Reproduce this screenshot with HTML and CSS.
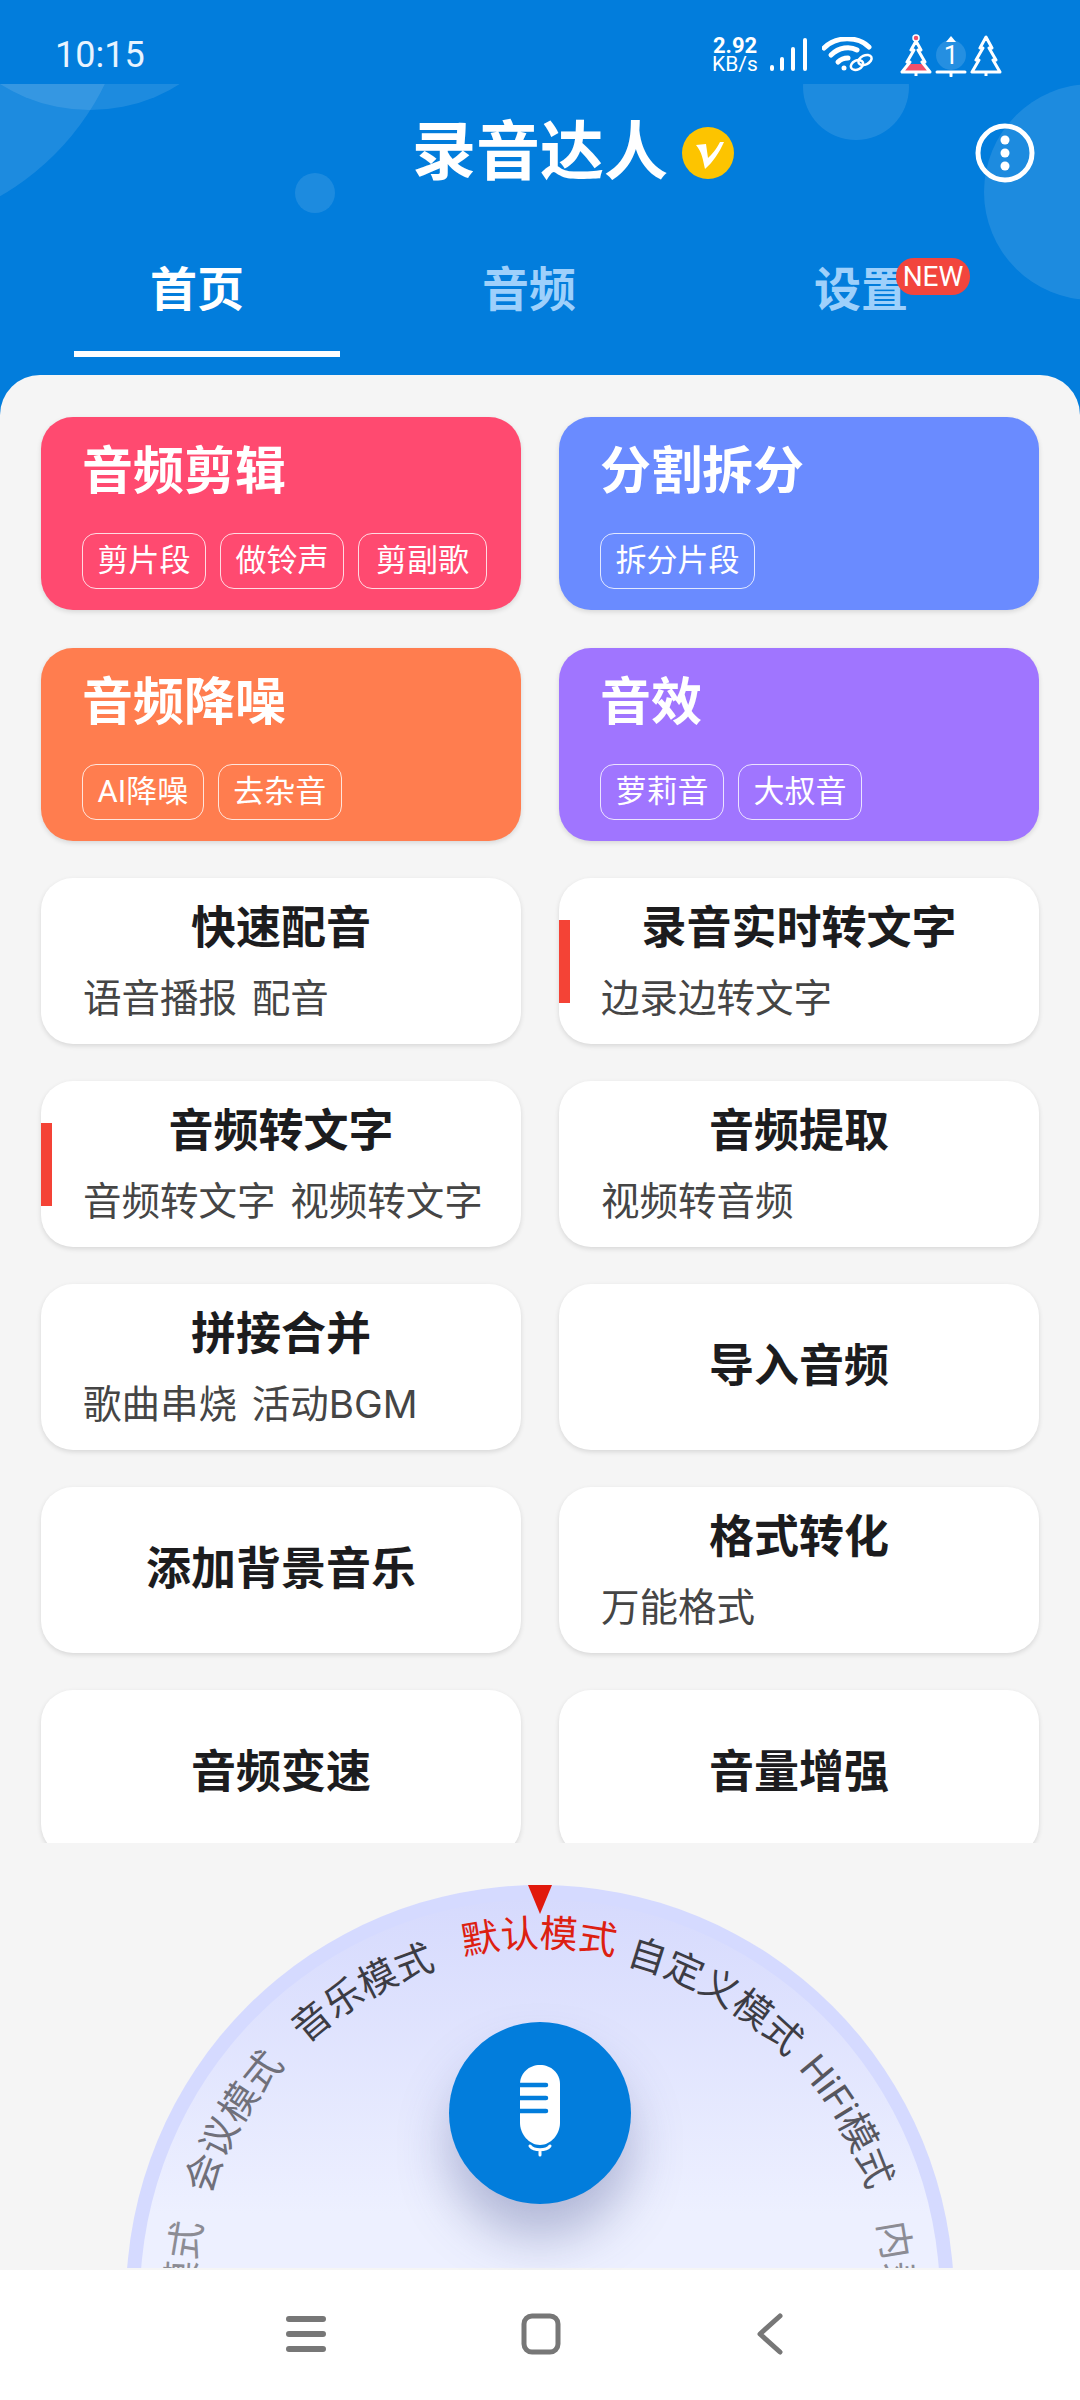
FILE: index.html
```html
<!DOCTYPE html>
<html lang="zh-CN">
<head>
    <meta charset="UTF-8">
    <meta name="viewport" content="width=device-width, initial-scale=1.0">
    <title>录音达人</title>
    <link rel="stylesheet" href="styles.css">
</head>
<body>
    <div class="app">
        <header class="header">
            <div class="status-bar">
                <span class="clock">10:15</span>
                <div class="status-icons">
                    <div class="net-speed"><b>2.92</b><span>KB/s</span></div>
                    <svg class="signal" width="38" height="36" viewBox="0 0 38 36" fill="#fff">
                        <rect x="0" y="28" width="4" height="6" rx="2"/>
                        <rect x="10" y="20" width="4" height="14" rx="2"/>
                        <rect x="21" y="10" width="4" height="24" rx="2"/>
                        <rect x="33" y="1" width="4" height="33" rx="2"/>
                    </svg>
                    <svg class="wifi" width="52" height="36" viewBox="0 0 52 36" fill="none" stroke="#fff" stroke-linecap="round">
                        <path d="M2 11 C14 -1 36 -1 47 10" stroke-width="5"/>
                        <path d="M9 18 C17 10 28 9 35 13" stroke-width="5"/>
                        <path d="M16 25 C19 22 23 21 26 21" stroke-width="5"/>
                        <circle cx="22" cy="31" r="2.5" fill="#fff" stroke="none"/>
                        <ellipse cx="35" cy="28" rx="6.5" ry="4.5" transform="rotate(-25 35 28)" stroke-width="2.5"/>
                        <ellipse cx="43" cy="23" rx="7" ry="4.5" transform="rotate(-25 43 23)" stroke-width="2.5"/>
                    </svg>
                    <div class="trees">
                        <svg width="32" height="44" viewBox="0 0 32 44">
                            <path d="M8 31 L24 31 L30 39 L2 39 Z" fill="#f2506a"/>
                            <path d="M16 8 L11 17 L14 17 L7 29 L10 29 L2 39 L30 39 L22 29 L25 29 L18 17 L21 17 Z M16 39 V43" fill="none" stroke="#fff" stroke-width="3" stroke-linejoin="round"/>
                            <circle cx="16" cy="5" r="3" fill="#f2506a" stroke="#fff" stroke-width="1.5"/>
                        </svg>
                        <svg width="32" height="44" viewBox="0 0 32 44">
                            <circle cx="16" cy="22" r="15" fill="#fff" opacity="0.14"/>
                            <path d="M16 3 L21 9 L11 9 Z" fill="#fff"/>
                            <path d="M2 39 L30 39 M16 39 V43" fill="none" stroke="#fff" stroke-width="3" stroke-linecap="round"/>
                            <text class="tree-num" x="16" y="31" text-anchor="middle">1</text>
                        </svg>
                        <svg width="32" height="44" viewBox="0 0 32 44">
                            <path d="M16 4 L10 15 L13 15 L6 27 L9 27 L2 39 L30 39 L23 27 L26 27 L19 15 L22 15 Z M16 39 V43" fill="none" stroke="#fff" stroke-width="3" stroke-linejoin="round"/>
                        </svg>
                    </div>
                </div>
            </div>

            <div class="bubble bubble-a"></div>
            <div class="bubble bubble-b"></div>
            <div class="bubble bubble-c"></div>
            <div class="bubble bubble-d"></div>
            <div class="bubble bubble-e"></div>

            <div class="title-row">
                <span></span>
                <h1>录音达人</h1>
                <div class="title-side">
                    <svg class="vip" width="52" height="52" viewBox="0 0 52 52">
                        <circle cx="26" cy="26" r="26" fill="#fdc400"/>
                        <path d="M14 18 L24 17 L26 31 C30 27 34 23 38 15 L42 15 C37 26 31 35 23 42 C21 33 20 25 14 18 Z" fill="#fff"/>
                    </svg>
                    <svg class="menu" width="60" height="60" viewBox="0 0 60 60">
                        <circle cx="30" cy="30" r="27" fill="none" stroke="#fff" stroke-width="5"/>
                        <circle cx="30" cy="17" r="4.5" fill="#fff"/>
                        <circle cx="30" cy="30" r="4.5" fill="#fff"/>
                        <circle cx="30" cy="43" r="4.5" fill="#fff"/>
                    </svg>
                </div>
            </div>

            <nav class="tabs">
                <div class="tab active"><span class="tab-label">首页</span><i class="tab-line"></i></div>
                <div class="tab"><span class="tab-label">音频</span></div>
                <div class="tab"><span class="tab-label">设置<em class="new-badge">NEW</em></span></div>
            </nav>
        </header>

        <main class="sheet">
            <section class="tools">
                <div class="tool-grid">
                    <div class="card hero pink">
                        <h2>音频剪辑</h2>
                        <div class="tags"><span>剪片段</span><span>做铃声</span><span class="wide">剪副歌</span></div>
                    </div>
                    <div class="card hero blue">
                        <h2>分割拆分</h2>
                        <div class="tags"><span>拆分片段</span></div>
                    </div>
                    <div class="card hero orange">
                        <h2>音频降噪</h2>
                        <div class="tags"><span>AI降噪</span><span>去杂音</span></div>
                    </div>
                    <div class="card hero purple">
                        <h2>音效</h2>
                        <div class="tags"><span>萝莉音</span><span>大叔音</span></div>
                    </div>

                    <div class="card plain"><h3>快速配音</h3><p>语音播报 配音</p></div>
                    <div class="card plain marked"><h3>录音实时转文字</h3><p>边录边转文字</p></div>
                    <div class="card plain marked"><h3>音频转文字</h3><p>音频转文字 视频转文字</p></div>
                    <div class="card plain"><h3>音频提取</h3><p>视频转音频</p></div>
                    <div class="card plain"><h3>拼接合并</h3><p>歌曲串烧 活动BGM</p></div>
                    <div class="card plain"><h3>导入音频</h3></div>
                    <div class="card plain"><h3>添加背景音乐</h3></div>
                    <div class="card plain"><h3>格式转化</h3><p>万能格式</p></div>
                    <div class="card plain"><h3>音频变速</h3></div>
                    <div class="card plain"><h3>音量增强</h3></div>
                </div>
            </section>

            <section class="recorder">
                <svg class="wheel" width="1080" height="425" viewBox="0 0 1080 425">
                    <defs>
                        <linearGradient id="wheel-fill" gradientUnits="userSpaceOnUse" x1="0" y1="42" x2="0" y2="370">
                            <stop offset="0" stop-color="#d5d9fd"/>
                            <stop offset="1" stop-color="#edf0ff"/>
                        </linearGradient>
                        <path id="mode-arc" d="M194 456 A346 346 0 0 1 886 456"/>
                    </defs>
                    <circle cx="540" cy="456" r="414" fill="#d5daff"/>
                    <circle cx="540" cy="456" r="400" fill="url(#wheel-fill)"/>
                    <path d="M528 42 L552 42 L540 71 Z" fill="#e1190c"/>
                    <text class="mode current" transform="translate(-1 -6)"><textPath href="#mode-arc" startOffset="50%" text-anchor="middle">默认模式</textPath></text>
                    <text class="mode near" transform="rotate(-30 540 456)"><textPath href="#mode-arc" startOffset="50%" text-anchor="middle">音乐模式</textPath></text>
                    <text class="mode near" transform="rotate(30 540 456)"><textPath href="#mode-arc" startOffset="50%" text-anchor="middle">自定义模式</textPath></text>
                    <text class="mode side" transform="rotate(-60 540 456)"><textPath href="#mode-arc" startOffset="50%" text-anchor="middle">会议模式</textPath></text>
                    <text class="mode mid" transform="rotate(60 540 456)"><textPath href="#mode-arc" startOffset="50%" text-anchor="middle">HiFi模式</textPath></text>
                    <text class="mode far" transform="rotate(-90 540 456)"><textPath href="#mode-arc" startOffset="50%">模式</textPath></text>
                    <text class="mode far" transform="rotate(90 540 456)"><textPath href="#mode-arc" startOffset="50%" text-anchor="middle">内录模式</textPath></text>
                </svg>
                <button class="record-btn">
                    <svg width="60" height="100" viewBox="0 0 60 100">
                        <path d="M30 2 C41 2 50 10 50 21 V60 C50 71 41 82 30 82 C19 82 10 71 10 60 V21 C10 10 19 2 30 2 Z" fill="#fff"/>
                        <path d="M10 22 H36 M10 35 H36 M10 48 H36" stroke="#027ddc" stroke-width="4.5" stroke-linecap="round"/>
                        <path d="M20 83 C24 88 36 88 40 83 M30 87 V92" fill="none" stroke="#fff" stroke-width="3" stroke-linecap="round"/>
                    </svg>
                </button>
            </section>
        </main>

        <footer class="nav-bar">
            <svg width="40" height="36" viewBox="0 0 40 36" stroke="#777" stroke-width="6" stroke-linecap="round">
                <path d="M3 3 H37 M3 18 H37 M3 33 H37"/>
            </svg>
            <svg width="40" height="42" viewBox="0 0 40 42">
                <rect x="3" y="3" width="34" height="36" rx="8" fill="none" stroke="#777" stroke-width="5"/>
            </svg>
            <svg width="28" height="42" viewBox="0 0 28 42">
                <path d="M24 3 L4 21 L24 39" fill="none" stroke="#777" stroke-width="5" stroke-linecap="round" stroke-linejoin="round"/>
            </svg>
        </footer>
    </div>
</body>
</html>
```

FILE: styles.css
```css
* {
    box-sizing: border-box;
}

body {
    margin: 0;
    font-family: Roboto, "Noto Sans CJK SC", sans-serif;
    background-color: #027ddc;
}

.app {
    width: 1080px;
    height: 2400px;
    display: flex;
    flex-direction: column;
    overflow: hidden;
    background-color: #027ddc;
}

/* header */
.header {
    position: relative;
    height: 375px;
    overflow: hidden;
    flex-shrink: 0;
}

.status-bar {
    height: 84px;
    padding: 26px 78px 0 55px;
    display: flex;
    justify-content: space-between;
    align-items: center;
    color: white;
    background-color: #027ddc;
    position: relative;
    z-index: 2;
}

.clock {
    font-size: 36px;
    color: #e8f4ff;
}

.status-icons {
    display: flex;
    align-items: center;
}

.net-speed {
    display: flex;
    flex-direction: column;
    align-items: center;
    width: 50px;
    font-size: 21px;
    line-height: 18px;
}

.net-speed b {
    font-size: 22px;
}

.signal {
    margin-left: 10px;
}

.wifi {
    margin-left: 14px;
}

.trees {
    display: flex;
    gap: 3px;
    margin-left: 26px;
}

.tree-num {
    font-size: 26px;
    fill: white;
}

.bubble {
    position: absolute;
    border-radius: 50%;
    background-color: rgba(255, 255, 255, 0.11);
}

.bubble-a {
    left: -79px;
    top: -228px;
    width: 338px;
    height: 338px;
}

.bubble-b {
    left: -391px;
    top: -291px;
    width: 522px;
    height: 522px;
}

.bubble-c {
    left: 803px;
    top: 34px;
    width: 106px;
    height: 106px;
}

.bubble-d {
    left: 295px;
    top: 173px;
    width: 40px;
    height: 40px;
}

.bubble-e {
    left: 984px;
    top: 84px;
    width: 216px;
    height: 216px;
}

.title-row {
    position: relative;
    height: 136px;
    padding: 2px 45px 0;
    display: grid;
    grid-template-columns: 1fr auto 1fr;
    align-items: center;
}

h1 {
    margin: 0;
    font-size: 64px;
    font-weight: 700;
    color: white;
    line-height: 1;
}

.title-side {
    display: flex;
    align-items: center;
    justify-content: space-between;
    padding-left: 14px;
}

.tabs {
    position: relative;
    display: grid;
    grid-template-columns: repeat(3, 332px);
    margin-top: 40px;
    padding-left: 31px;
}

.tab {
    display: flex;
    flex-direction: column;
    align-items: center;
    color: #9ed0fb;
    font-size: 47px;
    font-weight: 700;
}

.tab.active {
    color: white;
}

.tab-label {
    position: relative;
    height: 60px;
    line-height: 60px;
}

.tab-line {
    display: block;
    width: 266px;
    height: 6px;
    margin: 31px 0 0 20px;
    background-color: white;
}

.new-badge {
    position: absolute;
    left: 82px;
    top: -2px;
    width: 74px;
    height: 37px;
    border-radius: 18px;
    background-color: #f2453d;
    color: white;
    font-size: 28px;
    font-style: normal;
    font-weight: 400;
    line-height: 37px;
    text-align: center;
}

/* content */
.sheet {
    flex: 1;
    display: flex;
    flex-direction: column;
    background-color: #f5f5f5;
    border-radius: 40px 40px 0 0;
    overflow: hidden;
}

.tools {
    height: 1468px;
    padding: 42px 41px 0;
    overflow: hidden;
    flex-shrink: 0;
}

.tool-grid {
    display: grid;
    grid-template-columns: 480px 480px;
    grid-template-rows: 194px 193px;
    grid-auto-rows: 166px;
    column-gap: 38px;
    row-gap: 37px;
}

.card {
    position: relative;
    border-radius: 32px;
    box-shadow: 0 2px 5px rgba(0, 0, 0, 0.12);
}

.hero {
    height: 193px;
    padding: 22px 41px 0;
    color: white;
}

.pink {
    background-color: #ff4a70;
}

.blue {
    background-color: #6a8bff;
}

.orange {
    background-color: #ff7d4f;
}

.purple {
    background-color: #a075ff;
}

.hero h2 {
    margin: 0;
    font-size: 51px;
    font-weight: 700;
    line-height: 66px;
    white-space: nowrap;
}

.tags {
    display: flex;
    gap: 14px;
    margin: 28px 0 0 0;
}

.tags span {
    height: 56px;
    padding: 0 14.5px;
    border: 1px solid rgba(255, 255, 255, 0.8);
    border-radius: 14px;
    font-size: 31px;
    line-height: 54px;
    white-space: nowrap;
}

.tags .wide {
    padding: 0 17px;
}

.plain {
    background-color: white;
    display: flex;
    flex-direction: column;
    justify-content: center;
    padding: 0 42px;
}

.plain h3 {
    margin: 0;
    color: #1c1c1e;
    font-size: 45px;
    font-weight: 700;
    line-height: 60px;
    text-align: center;
    white-space: nowrap;
}

.plain p {
    margin: 13px 0 0;
    color: #454545;
    font-family: Inter, "Noto Sans CJK SC", sans-serif;
    font-size: 38.5px;
    line-height: 52px;
    word-spacing: 4px;
    white-space: nowrap;
}

.marked::before {
    content: "";
    position: absolute;
    left: 0;
    top: 42px;
    width: 11px;
    height: 83px;
    background-color: #f44336;
}

/* mode wheel */
.recorder {
    position: relative;
    flex: 1;
    overflow: hidden;
}

.wheel {
    display: block;
}

.mode {
    font-size: 38px;
}

.mode.current {
    fill: #dd2010;
}

.mode.near {
    fill: #3c3c44;
}

.mode.mid {
    fill: #56565e;
}

.mode.side {
    fill: #70707a;
}

.mode.far {
    fill: #8c8c94;
}

.record-btn {
    position: absolute;
    left: 449px;
    top: 179px;
    width: 182px;
    height: 182px;
    padding: 0;
    border: none;
    border-radius: 50%;
    background-color: #027ddc;
    box-shadow: 0 34px 50px rgba(70, 80, 140, 0.35);
    display: flex;
    align-items: center;
    justify-content: center;
}

/* system nav */
.nav-bar {
    height: 130px;
    flex-shrink: 0;
    background-color: white;
    display: flex;
    justify-content: center;
    align-items: center;
    gap: 195px;
    padding: 0 10px 2px 0;
}
```
